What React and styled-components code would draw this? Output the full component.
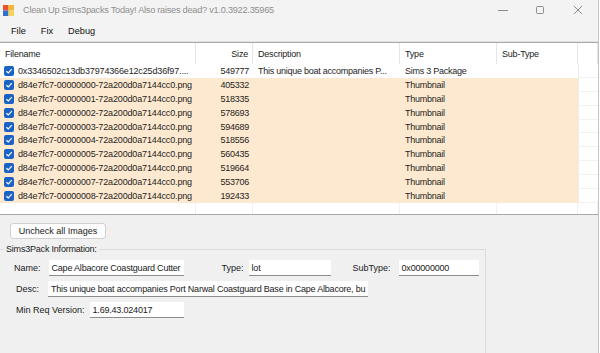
import React from "react";
import styled, { createGlobalStyle } from "styled-components";

const GlobalStyle = createGlobalStyle`
  html, body {
    margin: 0;
    padding: 0;
    background: #ffffff;
  }
  body {
    font-family: "Liberation Sans", Arial, sans-serif;
    font-size: 9px;
    letter-spacing: -0.2px;
    color: #1a1a1a;
  }
`;

const rows = [
  { name: "0x3346502c13db37974366e12c25d36f97....", size: "549777", desc: "This unique boat accompanies P...", type: "Sims 3 Package", image: false },
  ...Array.from({ length: 9 }, (_, i) => ({
    name: `d84e7fc7-0000000${i}-72a200d0a7144cc0.png`,
    size: ["405332", "518335", "578693", "594689", "518556", "560435", "519664", "553706", "192433"][i],
    desc: "",
    type: "Thumbnail",
    image: true,
  })),
];

const COLS = "196px 57px 147px 97px 81px 1fr";

function App() {
  return (
    <>
      <GlobalStyle />
      <Window>
        <TitleBar>
          <AppIcon viewBox="0 0 12 12">
            <rect x="0" y="0" width="6" height="6" fill="#e8532a" />
            <rect x="6" y="0" width="6" height="6" fill="#f2b636" />
            <rect x="0" y="6" width="6" height="6" fill="#2f6fd0" />
            <rect x="6" y="6" width="6" height="6" fill="#f6d35a" />
          </AppIcon>
          <Title>Clean Up Sims3packs Today! Also raises dead? v1.0.3922.35965</Title>
          <Controls>
            <Ctrl>
              <svg width="10" height="10" viewBox="0 0 10 10"><line x1="0" y1="5.5" x2="10" y2="5.5" stroke="#8c8c8c" strokeWidth="1" /></svg>
            </Ctrl>
            <Ctrl>
              <svg width="10" height="10" viewBox="0 0 10 10"><rect x="1.5" y="1.5" width="7" height="7" rx="1" fill="none" stroke="#8c8c8c" strokeWidth="1" /></svg>
            </Ctrl>
            <Ctrl>
              <svg width="10" height="10" viewBox="0 0 10 10"><path d="M1 1 L9 9 M9 1 L1 9" stroke="#8c8c8c" strokeWidth="1" /></svg>
            </Ctrl>
          </Controls>
        </TitleBar>
        <MenuBar>
          <MenuItem>File</MenuItem>
          <MenuItem>Fix</MenuItem>
          <MenuItem>Debug</MenuItem>
        </MenuBar>
        <ListView>
          <HeaderRow>
            <HeadCell>Filename</HeadCell>
            <HeadCell $right>Size</HeadCell>
            <HeadCell>Description</HeadCell>
            <HeadCell>Type</HeadCell>
            <HeadCell>Sub-Type</HeadCell>
            <HeadCell />
          </HeaderRow>
          {rows.map((r) => (
            <Row key={r.name} $image={r.image}>
              <Cell $first>
                <Check viewBox="0 0 10 10">
                  <rect x="0" y="0" width="10" height="10" rx="2" fill="#1a62c6" />
                  <path d="M2.4 5.2 L4.3 7 L7.8 3.2" fill="none" stroke="#fff" strokeWidth="1.2" />
                </Check>
                {r.name}
              </Cell>
              <Cell $right>{r.size}</Cell>
              <Cell>{r.desc}</Cell>
              <Cell>{r.type}</Cell>
              <Cell />
              <Cell $filler />
            </Row>
          ))}
          <EmptyArea>
            <EmptyCol /><EmptyCol /><EmptyCol /><EmptyCol /><EmptyCol /><EmptyCol />
          </EmptyArea>
        </ListView>
        <Bottom>
          <Button>Uncheck all Images</Button>
          <Group>
            <Legend>Sims3Pack Information:</Legend>
            <FieldRow>
              <Label $ml={14}>Name:</Label>
              <TextBox $ml={8} $w={135}>Cape Albacore Coastguard Cutter</TextBox>
              <Label $ml={38}>Type:</Label>
              <TextBox $ml={5} $w={82}>lot</TextBox>
              <Label $ml={22}>SubType:</Label>
              <TextBox $ml={8} $w={80}>0x00000000</TextBox>
            </FieldRow>
            <FieldRow>
              <Label $ml={16}>Desc:</Label>
              <TextBox $ml={9} $w={320}>This unique boat accompanies Port Narwal Coastguard Base in Cape Albacore, bu</TextBox>
            </FieldRow>
            <FieldRow>
              <Label $ml={16}>Min Req Version:</Label>
              <TextBox $ml={5} $w={94}>1.69.43.024017</TextBox>
            </FieldRow>
          </Group>
          <SidePane />
        </Bottom>
      </Window>
    </>
  );
}

const Window = styled.div`
  width: 598px;
  height: 353px;
  border-right: 1px solid #c4c4c4;
  background: #f0f0f0;
  display: flex;
  flex-direction: column;
  overflow: hidden;
`;

const TitleBar = styled.div`
  height: 20px;
  background: #f3f3f3;
  display: flex;
  align-items: center;
  padding-left: 3px;
`;

const AppIcon = styled.svg`
  width: 11px;
  height: 11px;
  margin-right: 9px;
`;

const Title = styled.div`
  color: #8f8f8f;
  font-size: 9.2px;
  letter-spacing: -0.25px;
  flex: 1;
  white-space: nowrap;
`;

const Controls = styled.div`
  display: flex;
  height: 100%;
`;

const Ctrl = styled.div`
  width: 37px;
  display: flex;
  align-items: center;
  justify-content: center;
  &:last-child {
    width: 40px;
  }
`;

const MenuBar = styled.div`
  height: 21px;
  background: #f3f3f3;
  display: flex;
  align-items: center;
  padding-left: 4px;
  border-bottom: 1px solid #e2e2e2;
`;

const MenuItem = styled.div`
  padding: 0 7px;
  color: #111;
  font-size: 9.2px;
  letter-spacing: 0;
  margin-right: 1px;
`;

const ListView = styled.div`
  height: 171px;
  background: #ffffff;
  border-top: 1px solid #a8a8a8;
  border-bottom: 1px solid #a8a8a8;
  display: flex;
  flex-direction: column;
  overflow: hidden;
`;

const HeaderRow = styled.div`
  display: grid;
  grid-template-columns: ${COLS};
  height: 21px;
`;

const HeadCell = styled.div`
  display: flex;
  align-items: center;
  justify-content: ${(p) => (p.$right ? "flex-end" : "flex-start")};
  padding: 0 4px 0 5px;
  border-right: 1px solid #e5e5e5;
  color: #222;
`;

const Row = styled.div`
  display: grid;
  grid-template-columns: ${COLS};
  height: 13.9px;
  background: ${(p) => (p.$image ? "#fde9cf" : "#ffffff")};
`;

const Cell = styled.div`
  display: flex;
  align-items: center;
  justify-content: ${(p) => (p.$right ? "flex-end" : "flex-start")};
  padding: ${(p) => (p.$first ? "0 0 0 4px" : p.$right ? "0 4px 0 0" : "0 0 0 5px")};
  letter-spacing: ${(p) => (p.$first ? "-0.15px" : "-0.25px")};
  white-space: nowrap;
  overflow: hidden;
  color: #1e1e1e;
  ${(p) => p.$filler && "background: #ffffff; border-left: 1px solid #ececec; border-bottom: 1px solid #f2f2f2;"}
`;

const Check = styled.svg`
  width: 10px;
  height: 10px;
  margin-right: 4px;
  flex-shrink: 0;
`;

const EmptyArea = styled.div`
  flex: 1;
  display: grid;
  grid-template-columns: ${COLS};
`;

const EmptyCol = styled.div`
  border-right: 1px solid #f0f0f0;
`;

const Bottom = styled.div`
  flex: 1;
  display: grid;
  grid-template-columns: 486px 1fr;
  grid-template-rows: auto 1fr;
`;

const Button = styled.button`
  grid-column: 1 / -1;
  justify-self: start;
  margin: 8px 0 10px 10px;
  width: 96px;
  height: 16px;
  padding: 0;
  font-family: inherit;
  font-size: 9px;
  letter-spacing: 0;
  color: #1a1a1a;
  background: #fdfdfd;
  border: 1px solid #d0d0d0;
  border-radius: 3px;
`;

const Group = styled.div`
  position: relative;
  border: 1px solid #dcdcdc;
  border-left: none;
  border-bottom: none;
  padding-top: 10px;
  display: flex;
  flex-direction: column;
  gap: 5px;
`;

const Legend = styled.div`
  position: absolute;
  top: -6px;
  left: 4px;
  padding: 0 2px;
  background: #f0f0f0;
  color: #1a1a1a;
`;

const SidePane = styled.div``;

const FieldRow = styled.div`
  display: flex;
  align-items: center;
  height: 16px;
`;

const Label = styled.div`
  margin-left: ${(p) => p.$ml}px;
  color: #1a1a1a;
  letter-spacing: 0;
  white-space: nowrap;
`;

const TextBox = styled.div`
  margin-left: ${(p) => p.$ml}px;
  width: ${(p) => p.$w}px;
  height: 16px;
  box-sizing: border-box;
  background: #ffffff;
  border-bottom: 1px solid #8c8c8c;
  padding-left: 3px;
  display: flex;
  align-items: center;
  white-space: nowrap;
  overflow: hidden;
  color: #1a1a1a;
`;

export default App;
